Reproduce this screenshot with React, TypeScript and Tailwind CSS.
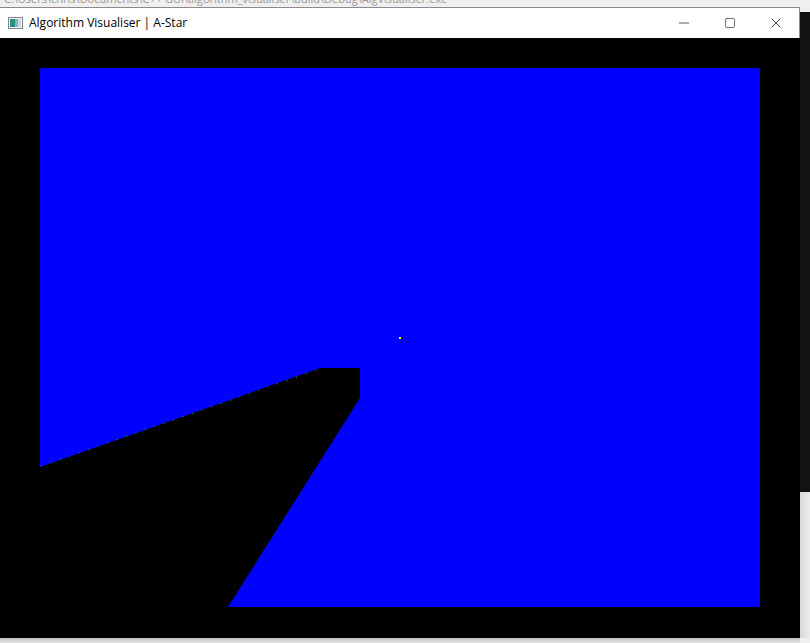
import { Minus, Square, X } from 'lucide-react';

function AppIcon() {
  return (
    <svg width="15" height="12" viewBox="0 0 15 12" className="shrink-0">
      <rect x="0.5" y="0.5" width="14" height="11" fill="#f4f6f8" stroke="#7a8591" />
      <rect x="2" y="2" width="5" height="8" fill="#2f8d7d" />
      <rect x="7" y="2" width="3" height="8" fill="#7fb7c9" />
      <rect x="10" y="2" width="3" height="8" fill="#cfd8df" />
    </svg>
  );
}

function Canvas() {
  return (
    <svg width="800" height="600" viewBox="0 0 800 600" className="block">
      <rect x="0" y="0" width="800" height="600" fill="#000" />
      <polygon
        points="40,30 760,30 760,569 228,569 360,360 360,330 320,330 40,429"
        fill="#0000ff"
      />
      <line x1="41" y1="428" x2="320" y2="331" stroke="#00c000" strokeWidth="1" strokeDasharray="1 9" />
      <rect x="399" y="299" width="2" height="2" fill="#ffff00" />
    </svg>
  );
}

export default function App() {
  return (
    <div className="w-[810px] h-[643px] bg-[#efefef] overflow-hidden flex flex-col" style={{ fontFamily: '"Open Sans", "Noto Sans", sans-serif' }}>
      <div className="h-[7px] overflow-hidden relative">
        <div className="absolute left-[4px] top-[-9px] text-[11px] text-[#9a9a9a] whitespace-nowrap">
          C:\Users\chris\Documents\C++ GUI\algorithm_visualiser\build\Debug\AlgVisualiser.exe
        </div>
      </div>
      <div className="flex">
        <div className="w-[800px] flex flex-col border-t border-r border-[#8a8a8a]">
          <div className="h-[30px] bg-white flex items-center">
            <div className="pl-[8px] pr-[6px] flex items-center">
              <AppIcon />
            </div>
            <span className="text-[12px] text-black leading-none">Algorithm Visualiser | A-Star</span>
            <div className="ml-auto flex h-full">
              <div className="w-[46px] flex items-center justify-center">
                <Minus size={16} strokeWidth={1} color="#000" />
              </div>
              <div className="w-[46px] flex items-center justify-center">
                <Square size={12} strokeWidth={1.1} color="#000" />
              </div>
              <div className="w-[46px] flex items-center justify-center">
                <X size={16} strokeWidth={1.1} color="#000" />
              </div>
            </div>
          </div>
          <Canvas />
        </div>
        <div className="w-[10px] flex flex-col">
          <div className="h-[5px] bg-[#efefef]" />
          <div className="h-[480px] bg-[#121212]" />
          <div className="flex-1 bg-gradient-to-r from-[#d8d8d8] to-[#ececec]" />
        </div>
      </div>
      <div className="flex-1 bg-gradient-to-b from-[#bdbdbd] to-[#e6e6e6] w-[800px]" />
    </div>
  );
}
